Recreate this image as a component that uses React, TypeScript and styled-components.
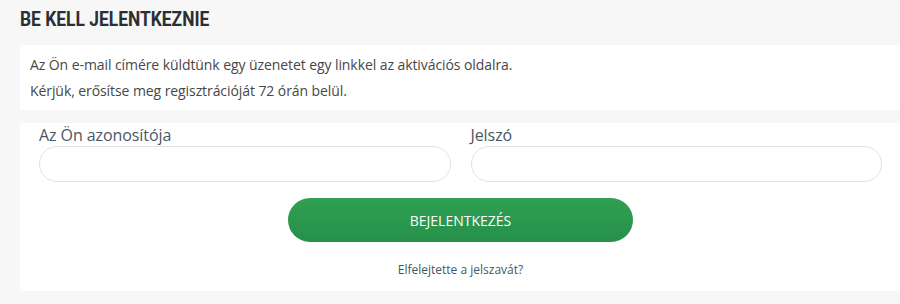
import styled, { createGlobalStyle } from "styled-components";

const GlobalStyle = createGlobalStyle`
  body {
    margin: 0;
    background: #f7f7f7;
    font-family: "Open Sans", "Liberation Sans", sans-serif;
  }
`;

const Page = styled.div`
  padding-left: 20px;
  width: 880px;
`;

const Title = styled.h1`
  margin: 0;
  height: 45px;
  padding-top: 6px;
  box-sizing: border-box;
  display: flex;
  align-items: flex-start;
`;

// condensed look: the reference uses a narrow bold face
const TitleText = styled.span`
  display: block;
  transform: scaleX(0.87);
  transform-origin: left center;
  font-family: Roboto, "Liberation Sans", sans-serif;
  font-weight: 700;
  font-size: 20px;
  line-height: 26px;
  color: #2b2f33;
  white-space: nowrap;
`;

const Notice = styled.div`
  background: #fff;
  padding: 7px 10px 6px;
  font-size: 14px;
  line-height: 26px;
  letter-spacing: -0.08px;
  color: #474747;
`;

const FormBox = styled.form`
  margin-top: 13px;
  background: #fff;
  padding: 1px 18px 13px 19px;
  display: flex;
  flex-direction: column;
  align-items: center;
`;

const Fields = styled.div`
  width: 100%;
  display: grid;
  grid-template-columns: 1fr 1fr;
  column-gap: 20px;
`;

const Field = styled.label`
  display: flex;
  flex-direction: column;
`;

const Label = styled.span`
  font-size: 16px;
  line-height: 22px;
  letter-spacing: -0.08px;
  color: #4a5866;
`;

const Input = styled.input`
  height: 36px;
  box-sizing: border-box;
  border: 1px solid #e2e2e2;
  border-radius: 18px;
  background: #fff;
  padding: 0 16px;
  font-family: inherit;
  font-size: 14px;
  outline: none;
`;

const Submit = styled.button`
  margin-top: 16px;
  width: 345px;
  height: 44px;
  border: none;
  border-radius: 22px;
  background: linear-gradient(#2fa052, #26904a);
  color: #fff;
  font-family: "Open Sans", "Liberation Sans", sans-serif;
  font-size: 14px;
  text-transform: uppercase;
  cursor: pointer;
`;

const Forgot = styled.a`
  margin-top: 20px;
  font-size: 12px;
  line-height: 16px;
  color: #3f586b;
  text-decoration: none;
`;

export default function App() {
  return (
    <Page>
      <GlobalStyle />
      <Title>
        <TitleText>BE KELL JELENTKEZNIE</TitleText>
      </Title>
      <Notice>
        Az Ön e-mail címére küldtünk egy üzenetet egy linkkel az aktivációs oldalra.
        <br />
        Kérjük, erősítse meg regisztrációját 72 órán belül.
      </Notice>
      <FormBox onSubmit={(e) => e.preventDefault()}>
        <Fields>
          <Field>
            <Label>Az Ön azonosítója</Label>
            <Input type="text" />
          </Field>
          <Field>
            <Label>Jelszó</Label>
            <Input type="password" />
          </Field>
        </Fields>
        <Submit type="submit">Bejelentkezés</Submit>
        <Forgot href="#">Elfelejtette a jelszavát?</Forgot>
      </FormBox>
    </Page>
  );
}
